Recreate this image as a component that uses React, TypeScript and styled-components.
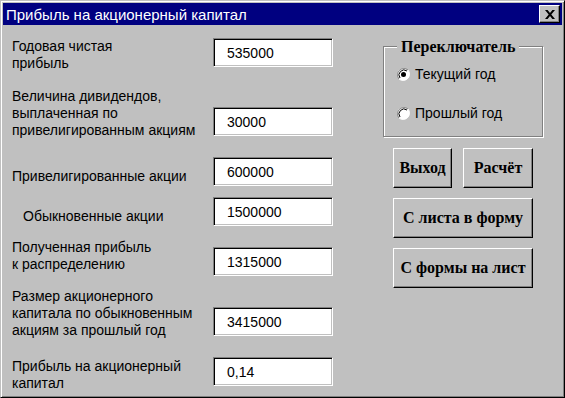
import React, { useState } from 'react';
import styled, { createGlobalStyle } from 'styled-components';

const GlobalStyle = createGlobalStyle`
  html, body {
    margin: 0;
    padding: 0;
    background: #c0c0c0;
  }
`;

const Window = styled.div`
  width: 565px;
  height: 398px;
  box-sizing: border-box;
  background: #c0c0c0;
  border: 1px solid;
  border-color: #c0c0c0 #000 #000 #c0c0c0;
  box-shadow: inset 1px 1px 0 #fff, inset -1px -1px 0 #808080;
  padding: 2px;
  display: flex;
  flex-direction: column;
  font-family: 'Liberation Sans', Arial, sans-serif;
`;

const TitleBar = styled.div`
  height: 22px;
  background: #000080;
  display: flex;
  align-items: center;
  justify-content: space-between;
  padding: 0 2px 0 3px;
`;

const Title = styled.span`
  color: #fff;
  font-size: 15px;
`;

const CloseButton = styled.button`
  width: 21px;
  height: 18px;
  padding: 0;
  background: #c0c0c0;
  border: 1px solid;
  border-color: #fff #000 #000 #fff;
  box-shadow: inset -1px -1px 0 #808080;
  display: flex;
  align-items: center;
  justify-content: center;
`;

const Body = styled.div`
  flex: 1;
  display: flex;
  padding-left: 9px;
`;

const LeftCol = styled.div`
  width: 371px;
  display: flex;
  flex-direction: column;
`;

const Field = styled.div<{ h: number }>`
  height: ${({ h }) => h}px;
  display: flex;
  align-items: flex-start;
`;

const Label = styled.div<{ top: number; indent?: number }>`
  width: ${({ indent = 0 }) => 201 - indent}px;
  margin-top: ${({ top }) => top}px;
  padding-left: ${({ indent = 0 }) => indent}px;
  font-size: 14px;
  line-height: 17px;
  color: #000;
`;

const TextBox = styled.div<{ top: number }>`
  margin-top: ${({ top }) => top}px;
  width: 120px;
  height: 29px;
  box-sizing: border-box;
  background: #fff;
  border: 1px solid;
  border-color: #808080 #fff #fff #808080;
  box-shadow: inset 1px 1px 0 #000, inset -1px -1px 0 #c0c0c0;
  padding-left: 13px;
  display: flex;
  align-items: center;
  font-size: 14px;
  color: #000;
`;

const RightCol = styled.div`
  width: 162px;
  display: flex;
  flex-direction: column;
`;

const Group = styled.fieldset`
  margin: 13px 0 0 0;
  width: 160px;
  box-sizing: border-box;
  height: 99px;
  padding: 0 0 0 13px;
  border: 1px solid #808080;
  box-shadow: 1px 1px 0 #fff, inset 1px 1px 0 #fff;
  display: flex;
  flex-direction: column;
  gap: 19px;
`;

const Legend = styled.legend`
  margin-left: 0;
  padding: 0 4px;
  background: #c0c0c0;
  font-family: 'Liberation Serif', 'Times New Roman', serif;
  font-weight: bold;
  font-size: 16px;
  line-height: 17px;
`;

const RadioRow = styled.label<{ first?: boolean }>`
  height: 20px;
  margin-top: ${({ first }) => (first ? 9 : 0)}px;
  display: flex;
  align-items: center;
  gap: 5px;
  font-size: 14px;
  cursor: default;
`;

const Buttons = styled.div`
  margin: 11px 0 0 10px;
  display: grid;
  grid-template-columns: 59px 70px;
  column-gap: 11px;
  row-gap: 10px;
`;

const Button = styled.button<{ wide?: boolean }>`
  grid-column: ${({ wide }) => (wide ? '1 / span 2' : 'auto')};
  height: 40px;
  padding: 0;
  background: #c0c0c0;
  border: 1px solid;
  border-color: #fff #000 #000 #fff;
  box-shadow: inset -1px -1px 0 #808080;
  font-family: 'Liberation Serif', 'Times New Roman', serif;
  font-weight: bold;
  font-size: 16px;
  color: #000;
`;

const Radio: React.FC<{ checked: boolean }> = ({ checked }) => (
  <svg width="13" height="13" viewBox="0 0 13 13">
    <circle cx="6.5" cy="6.5" r="6" fill="#fff" />
    <path d="M2 11 A6.4 6.4 0 0 1 11 2" stroke="#808080" strokeWidth="1" fill="none" />
    <path d="M3 10 A5 5 0 0 1 10 3" stroke="#000" strokeWidth="1" fill="none" />
    <path d="M11 2 A6.4 6.4 0 0 1 2 11" stroke="#fff" strokeWidth="1" fill="none" />
    {checked && <circle cx="6.5" cy="6.5" r="2.5" fill="#000" />}
  </svg>
);

const fields = [
  { h: 57, lt: 13, bt: 13, text: ['Годовая чистая', 'прибыль'], value: '535000' },
  { h: 63, lt: 6, bt: 25, text: ['Величина дивидендов,', 'выплаченная по', 'привелигированным акциям'], value: '30000' },
  { h: 45, lt: 23, bt: 12, text: ['Привелигированные акции'], value: '600000' },
  { h: 42, lt: 18, bt: 7, text: ['Обыкновенные акции'], value: '1500000', indent: 11 },
  { h: 50, lt: 7, bt: 15, text: ['Полученная прибыль', 'к распределению'], value: '1315000' },
  { h: 68, lt: 6, bt: 25, text: ['Размер акционерного', 'капитала по обыкновенным', 'акциям за прошлый год'], value: '3415000' },
  { h: 45, lt: 8, bt: 7, text: ['Прибыль на акционерный', 'капитал'], value: '0,14' },
];

export default function App() {
  const [period, setPeriod] = useState<'current' | 'last'>('current');

  return (
    <>
      <GlobalStyle />
      <Window>
        <TitleBar>
          <Title>Прибыль на акционерный капитал</Title>
          <CloseButton aria-label="Закрыть">
            <svg width="10" height="9" viewBox="0 0 10 9">
              <path d="M0 0h2.6l2.4 3 2.4-3H10L6.3 4.5 10 9H7.4L5 6 2.6 9H0l3.7-4.5z" fill="#000" />
            </svg>
          </CloseButton>
        </TitleBar>
        <Body>
          <LeftCol>
            {fields.map((f) => (
              <Field key={f.value} h={f.h}>
                <Label top={f.lt} indent={f.indent}>
                  {f.text.map((line) => (
                    <div key={line}>{line}</div>
                  ))}
                </Label>
                <TextBox top={f.bt}>{f.value}</TextBox>
              </Field>
            ))}
          </LeftCol>
          <RightCol>
            <Group>
              <Legend>Переключатель</Legend>
              <RadioRow first onClick={() => setPeriod('current')}>
                <Radio checked={period === 'current'} />
                Текущий год
              </RadioRow>
              <RadioRow onClick={() => setPeriod('last')}>
                <Radio checked={period === 'last'} />
                Прошлый год
              </RadioRow>
            </Group>
            <Buttons>
              <Button>Выход</Button>
              <Button>Расчёт</Button>
              <Button wide>С листа в форму</Button>
              <Button wide>С формы на лист</Button>
            </Buttons>
          </RightCol>
        </Body>
      </Window>
    </>
  );
}
